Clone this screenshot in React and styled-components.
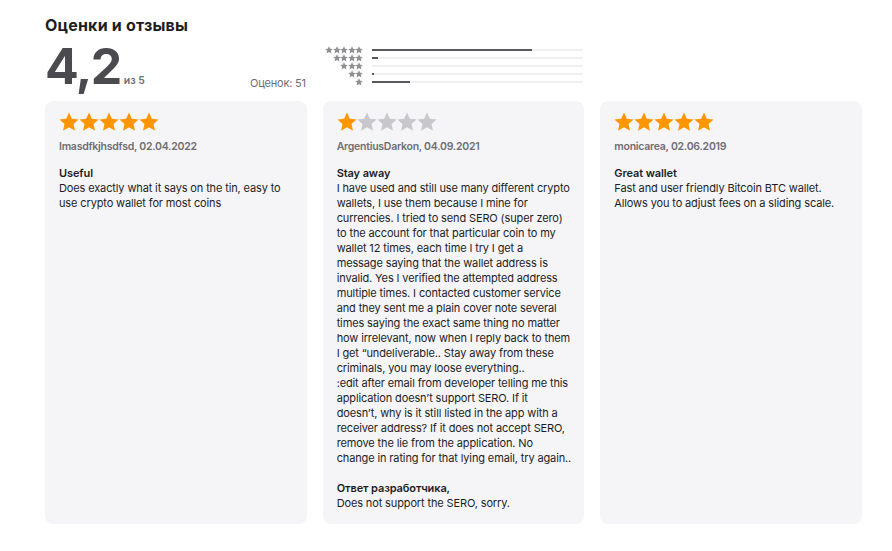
import React from "react";
import styled, { createGlobalStyle } from "styled-components";

const GlobalStyle = createGlobalStyle`
	html, body {
		margin: 0;
		background: #fff;
	}
	body {
		font-family: Inter, "Noto Sans", sans-serif;
		color: #1d1d1f;
		-webkit-font-smoothing: antialiased;
	}
`;

const histogram = [76, 3, 0, 1, 18];

// lines kept as in the store layout
const reviews = [
	{
		stars: 5,
		author: "Imasdfkjhsdfsd, 02.04.2022",
		title: "Useful",
		body: ["Does exactly what it says on the tin, easy to", "use crypto wallet for most coins"],
	},
	{
		stars: 1,
		author: "ArgentiusDarkon, 04.09.2021",
		title: "Stay away",
		body: [
			"I have used and still use many different crypto",
			"wallets, I use them because I mine for",
			"currencies. I tried to send SERO (super zero)",
			"to the account for that particular coin to my",
			"wallet 12 times, each time I try I get a",
			"message saying that the wallet address is",
			"invalid. Yes I verified the attempted address",
			"multiple times. I contacted customer service",
			"and they sent me a plain cover note several",
			"times saying the exact same thing no matter",
			"how irrelevant, now when I reply back to them",
			"I get “undeliverable.. Stay away from these",
			"criminals, you may loose everything..",
			":edit after email from developer telling me this",
			"application doesn’t support SERO. If it",
			"doesn’t, why is it still listed in the app with a",
			"receiver address? If it does not accept SERO,",
			"remove the lie from the application. No",
			"change in rating for that lying email, try again..",
		],
		response: "Does not support the SERO, sorry.",
	},
	{
		stars: 5,
		author: "monicarea, 02.06.2019",
		title: "Great wallet",
		body: ["Fast and user friendly Bitcoin BTC wallet.", "Allows you to adjust fees on a sliding scale."],
	},
];

const Star = ({ size, color }) => (
	<svg width={size} height={size} viewBox="0 0 24 24">
		<path
			fill={color}
			d="M12 0.6l3.4 7.4 8.1.9-6.1 5.5 1.8 8L12 18.3l-7.2 4.1 1.8-8L.5 8.9l8.1-.9z"
		/>
	</svg>
);

const ReviewsSection = () => (
	<Page>
		<GlobalStyle />
		<Heading>Оценки и отзывы</Heading>
		<Summary>
			<Score>
				<Big>4,2</Big>
				<OutOf>из 5</OutOf>
			</Score>
			<Count>Оценок: 51</Count>
			<Histogram>
				{histogram.map((pct, i) => (
					<HistRow key={i}>
						<SmallStars>
							{Array.from({ length: 5 - i }).map((_, j) => (
								<Star key={j} size={8} color="#8e8e93" />
							))}
						</SmallStars>
						<Track>
							<Fill style={{ width: `${pct}%` }} />
						</Track>
					</HistRow>
				))}
			</Histogram>
		</Summary>
		<Cards>
			{reviews.map((r) => (
				<Card key={r.author}>
					<Stars>
						{Array.from({ length: 5 }).map((_, j) => (
							<Star key={j} size={20} color={j < r.stars ? "#ff9500" : "#c7c7cc"} />
						))}
					</Stars>
					<Author>{r.author}</Author>
					<Title>{r.title}</Title>
					<Body>{r.body.join("\n")}</Body>
					{r.response && (
						<>
							<Title $spaced>Ответ разработчика,</Title>
							<Body>{r.response}</Body>
						</>
					)}
				</Card>
			))}
		</Cards>
	</Page>
);

const Page = styled.main`
	padding: 14px 30px 27px 45px;
	width: 892px;
	box-sizing: border-box;
`;

const Heading = styled.h2`
	margin: 0;
	font-size: 16px;
	font-weight: 700;
	letter-spacing: 0.2px;
	line-height: 22px;
`;

const Summary = styled.div`
	display: flex;
	align-items: flex-start;
	height: 56px;
	margin-top: 2px;
`;

const Score = styled.div`
	display: flex;
	align-items: baseline;
	width: 205px;
`;

const Big = styled.span`
	font-size: 50px;
	font-weight: 700;
	letter-spacing: -1.5px;
	color: #4a4a4f;
	line-height: 56px;
`;

const OutOf = styled.span`
	font-size: 10.5px;
	font-weight: 600;
	color: #6e6e73;
	margin-left: 3px;
`;

const Count = styled.span`
	font-size: 11px;
	letter-spacing: -0.2px;
	color: #6e6e73;
	margin-top: 38px;
	width: 72px;
`;

const Histogram = styled.div`
	display: flex;
	flex-direction: column;
	margin-top: 8px;
`;

const HistRow = styled.div`
	display: flex;
	align-items: center;
	height: 8px;
`;

const SmallStars = styled.div`
	display: flex;
	justify-content: flex-end;
	width: 41px;
	margin-right: 9px;
	svg {
		margin-left: -0.5px;
	}
`;

const Track = styled.div`
	width: 211px;
	height: 2px;
	background: #efeff4;
`;

const Fill = styled.div`
	height: 100%;
	background: #58585d;
`;

const Cards = styled.div`
	display: grid;
	grid-template-columns: repeat(3, 1fr);
	gap: 16px;
	margin-top: 7px;
`;

const Card = styled.article`
	background: #f5f5f7;
	border-radius: 8px;
	padding: 11px 10px 14px 14px;
	height: 423px;
	box-sizing: border-box;
	overflow: hidden;
`;

const Stars = styled.div`
	display: flex;
	margin-bottom: 8px;
`;

const Author = styled.div`
	font-size: 10.5px;
	font-weight: 600;
	letter-spacing: -0.25px;
	color: #6e6e73;
	margin-bottom: 13px;
`;

const Title = styled.div`
	font-size: 11px;
	font-weight: 600;
	letter-spacing: -0.1px;
	line-height: 15px;
	color: #1d1d1f;
	margin-top: ${(p) => (p.$spaced ? "15px" : "0")};
`;

const Body = styled.p`
	margin: 0;
	font-size: 11px;
	letter-spacing: -0.13px;
	line-height: 15px;
	color: #1d1d1f;
	white-space: pre-line;
`;

export default ReviewsSection;
